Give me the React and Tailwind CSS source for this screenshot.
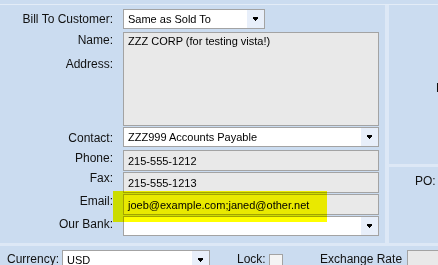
import React from 'react';

const font = { fontFamily: '"Liberation Sans", Arial, sans-serif' };

function Arrow() {
  return (
    <svg width="5" height="4" viewBox="0 0 5 4" className="block">
      <rect x="0" y="0" width="5" height="1" fill="#000" />
      <rect x="0" y="1" width="5" height="1" fill="#000" />
      <rect x="1" y="2" width="3" height="1" fill="#000" />
      <rect x="2" y="3" width="1" height="1" fill="#000" />
    </svg>
  );
}

function Dropdown({ value, className = '' }) {
  return (
    <div className={`flex shrink-0 border border-[#a3a3a3] bg-white ${className}`}>
      <div className="flex-1 truncate pl-[4px] pt-[3px] text-[11px] leading-[13px] text-black">{value}</div>
      <div className="flex w-[17px] items-center justify-center bg-[#e8effa]">
        <Arrow />
      </div>
    </div>
  );
}

function Field({ value, className = '' }) {
  return (
    <div className={`border border-[#a3a3a3] bg-[#e9e9e9] pl-[4px] text-[11px] leading-[13px] text-black ${className}`}>
      {value}
    </div>
  );
}

function Row({ label, labelPad, className = '', children }) {
  return (
    <div className={`flex items-start ${className}`}>
      <div className={`w-[113px] shrink-0 text-right text-[12px] leading-[14px] text-[#111] ${labelPad}`}>{label}</div>
      <div className="ml-[10px]">{children}</div>
    </div>
  );
}

export default function App() {
  return (
    <div className="h-[265px] w-[438px] overflow-hidden bg-[#cbdcf0]" style={font}>
      <div className="h-[4px]" />
      <div className="h-[1px] bg-[#e3ecf7]" />
      <div className="flex h-[238px]">
        <div className="relative w-[385px] shrink-0 pt-[4px]">
          <Row label="Bill To Customer:" labelPad="pt-[3px]">
            <Dropdown value="Same as Sold To" className="h-[20px] w-[142px]" />
          </Row>

          <div className="mt-[3px] flex items-start">
            <div className="w-[113px] shrink-0 text-right text-[12px] leading-[14px] text-[#111]">
              <div className="pt-[1px]">Name:</div>
              <div className="mt-[10px]">Address:</div>
            </div>
            <div className="ml-[10px]">
              <Field value="ZZZ CORP (for testing vista!)" className="h-[94px] w-[256px] pt-[2px]" />
            </div>
          </div>

          <Row label="Contact:" labelPad="pt-[4px]" className="mt-[1px]">
            <Dropdown value="ZZZ999 Accounts Payable" className="h-[20px] w-[256px]" />
          </Row>
          <Row label="Phone:" labelPad="pt-[1px]" className="mt-[3px]">
            <Field value="215-555-1212" className="h-[21px] w-[256px] pt-[4px]" />
          </Row>
          <Row label="Fax:" labelPad="pt-0 -mt-[1px]" className="mt-[1px]">
            <Field value="215-555-1213" className="h-[21px] w-[256px] pt-[4px]" />
          </Row>
          <Row label="Email:" labelPad="pt-0" className="mt-[1px]">
            <Field value="joeb@example.com;janed@other.net" className="h-[21px] w-[256px] pt-[4px]" />
          </Row>
          <Row label="Our Bank:" labelPad="pt-[1px]" className="mt-[1px]">
            <Dropdown value="" className="h-[20px] w-[256px]" />
          </Row>

          <div className="pointer-events-none absolute left-[113px] top-[186px] h-[31px] w-[214px] bg-[#ffff00] mix-blend-multiply" />
        </div>

        <div className="w-[4px] shrink-0 bg-[#dde8f6]" />

        <div className="flex flex-1 flex-col">
          <div className="h-[159px] pl-[47px] pt-[76px] text-[12px] leading-[14px] text-[#111]">L</div>
          <div className="h-[3px] bg-[#dde8f6]" />
          <div className="pl-[26px] pt-[7px] text-[12px] leading-[14px] text-[#111]">PO:</div>
        </div>
      </div>
      <div className="h-[3px] bg-[#dde8f6]" />

      <div className="flex items-start whitespace-nowrap pt-[4px] text-[12px] leading-[14px] text-[#111]">
        <div className="w-[62px] shrink-0 pl-[7px] pt-[2px]">Currency:</div>
        <Dropdown value="USD" className="h-[20px] w-[148px]" />
        <div className="ml-[27px] w-[32px] shrink-0 pt-[2px]">Lock:</div>
        <div className="mt-[4px] h-[14px] w-[14px] shrink-0 border border-[#a3a3a3] bg-[#f4f4f4]" />
        <div className="ml-[37px] w-[87px] shrink-0 pt-[2px]">Exchange Rate</div>
        <div className="h-[20px] w-[40px] shrink-0 border border-[#a3a3a3] bg-[#e9e9e9]" />
      </div>
    </div>
  );
}
